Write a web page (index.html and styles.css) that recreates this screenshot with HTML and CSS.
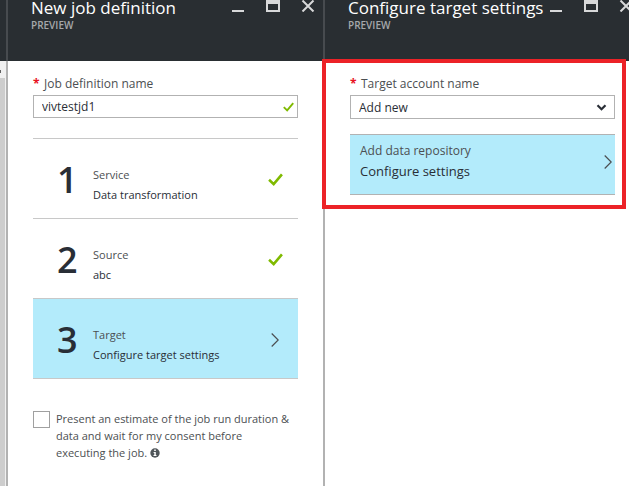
FILE: index.html
```html
<!DOCTYPE html>
<html lang="en">
<head>
<meta charset="utf-8">
<meta name="viewport" content="width=device-width, initial-scale=1">
<title>New job definition</title>
<link rel="stylesheet" href="styles.css">
</head>
<body>
<svg class="sprite" aria-hidden="true">
  <symbol id="minimize" viewBox="0 0 14 12"><path d="M1 10h12v2H1z"/></symbol>
  <symbol id="maximize" viewBox="0 0 14 12"><path fill-rule="evenodd" d="M0 0h14v12H0zM2 4v6h10V4z"/></symbol>
  <symbol id="close" viewBox="0 0 14 12"><path d="M1.500 0.500 12.500 11.500M12.500 0.500 1.500 11.500" fill="none" stroke="currentColor" stroke-width="2"/></symbol>
  <symbol id="check" viewBox="0 0 14 12"><path d="M1 6.200 5.300 10.300 13 1.200" fill="none" stroke="currentColor" stroke-width="2.400"/></symbol>
  <symbol id="chevron" viewBox="0 0 8 14"><path d="M.700.500 7.200 7 .700 13.500" fill="none" stroke="currentColor" stroke-width="1.200"/></symbol>
  <symbol id="caret" viewBox="0 0 10 7"><path d="M1 1.200 5 5.200 9 1.200" fill="none" stroke="currentColor" stroke-width="2.200"/></symbol>
</svg>
<div class="portal">
  <div class="rail"><div class="rail-top"></div><div class="rail-arrow"></div><div class="rail-thumb"></div></div>

  <section class="blade">
    <header class="blade-header">
      <div class="heading"><h1>New job definition</h1><p>PREVIEW</p></div>
      <div class="actions">
        <button type="button" aria-label="Minimize"><svg><use href="#minimize"/></svg></button>
        <button type="button" aria-label="Maximize"><svg><use href="#maximize"/></svg></button>
        <button type="button" aria-label="Close"><svg><use href="#close"/></svg></button>
      </div>
    </header>
    <div class="blade-body">
      <label class="field-label" for="job-name"><span class="required">*</span>Job definition name</label>
      <div class="field">
        <input class="control" id="job-name" type="text" value="vivtestjd1">
        <svg class="field-icon valid"><use href="#check"/></svg>
      </div>
      <div class="steps">
        <button class="step" type="button">
          <span class="number">1</span>
          <span class="step-text"><span>Service</span><span class="value">Data transformation</span></span>
          <svg class="check"><use href="#check"/></svg>
        </button>
        <button class="step" type="button">
          <span class="number">2</span>
          <span class="step-text"><span>Source</span><span class="value">abc</span></span>
          <svg class="check"><use href="#check"/></svg>
        </button>
        <button class="step selected" type="button">
          <span class="number">3</span>
          <span class="step-text"><span>Target</span><span class="value">Configure target settings</span></span>
          <svg class="chevron"><use href="#chevron"/></svg>
        </button>
      </div>
      <div class="consent">
        <input id="consent" type="checkbox">
        <label for="consent">Present an estimate of the job run duration &amp; data and wait for my consent before executing the job. <svg class="info" viewBox="0 0 10 10"><circle cx="5" cy="5" r="4.700" fill="#50565a"/><path d="M4.200 1.600h1.600v1.400H4.200zM3.600 4h2.200v3h.700v1h-3V7h.800V5h-.700z" fill="#fff"/></svg></label>
      </div>
    </div>
  </section>

  <section class="blade target">
    <header class="blade-header">
      <div class="heading"><h1>Configure target settings</h1><p>PREVIEW</p></div>
      <div class="actions">
        <button type="button" aria-label="Minimize"><svg><use href="#minimize"/></svg></button>
        <button type="button" aria-label="Maximize"><svg><use href="#maximize"/></svg></button>
        <button type="button" aria-label="Close"><svg><use href="#close"/></svg></button>
      </div>
    </header>
    <div class="blade-body">
      <label class="field-label" for="account"><span class="required">*</span>Target account name</label>
      <div class="field">
        <select class="control" id="account"><option>Add new</option></select>
        <svg class="field-icon caret"><use href="#caret"/></svg>
      </div>
      <button class="repository" type="button">
        <span class="repository-text"><span>Add data repository</span><span class="repository-value">Configure settings</span></span>
        <svg class="chevron"><use href="#chevron"/></svg>
      </button>
      <div class="highlight"></div>
    </div>
  </section>
</div>
</body>
</html>
```

FILE: styles.css
```css
* { box-sizing: border-box; }

body {
  margin: 0;
  background: #fff;
  color: #4c4f52;
  font: 12px/17px "Open Sans", "Noto Sans", sans-serif;
  overflow: hidden;
}

button, input, select { font: inherit; color: inherit; border-radius: 0; }
button { margin: 0; padding: 0; border: 0; background: none; text-align: left; cursor: pointer; }
svg { display: block; fill: currentColor; }
.sprite { position: absolute; width: 0; height: 0; }

.portal {
  display: grid;
  grid-template-columns: 6px 317fr 306fr;
  min-height: 100vh;
}

.rail { display: flex; flex-direction: column; background: #f0f0f0; }
.rail-top { height: 61px; background: #292e32; }
.rail-arrow { width: 1px; height: 3px; margin: 9px 0 5px; background: #606060; }
.rail-thumb { flex: 1; width: 5px; background: #cdcdcd; }

.blade { display: flex; flex-direction: column; min-width: 0; }
.blade-header {
  display: flex;
  justify-content: space-between;
  height: 61px;
  padding: 0 8px 0 23px;
  border-left: 2px solid #474b4f;
  background: #292e32;
  color: #fff;
}
.heading { white-space: nowrap; }
h1 { margin: -4px 0 0; font-size: 17px; line-height: 24px; font-weight: 400; }
.heading p { margin: 0; font-size: 10px; line-height: 10px; font-weight: 600; color: #a5a8aa; }
.actions { display: flex; gap: 21px; color: #d8d9da; }
.actions button { height: 12px; }
.actions svg { width: 14px; height: 12px; }

.blade-body {
  position: relative;
  flex: 1;
  padding: 14px 25px 20px;
  border-left: 2px solid #b2b2b2;
}
.target .blade-header { padding-right: 0; }
.target .actions { margin-right: -4px; }
.target .blade-body { padding-right: 14px; }

.field-label { display: flex; height: 20px; line-height: 18px; }
.required { width: 11px; color: #e81123; font-weight: 700; }
.field { position: relative; }
.control {
  display: block;
  width: 100%;
  height: 24px;
  padding: 0 24px 0 8px;
  border: 1px solid #b2b2b2;
  background: #fff;
  color: #292e36;
  appearance: none;
}
input.control { height: 23px; }
.field-icon { position: absolute; }
.valid { top: 7px; right: 4px; width: 11px; height: 10px; color: #7fba00; }
.caret { top: 9px; right: 8px; width: 11px; height: 7px; color: #292e36; }

.steps { margin-top: 20px; border-top: 1px solid #c8c8c8; }
.step {
  display: flex;
  align-items: center;
  width: 100%;
  height: 80px;
  padding: 2px 15px 0 24px;
  border-bottom: 1px solid #c8c8c8;
  font-size: 11px;
}
.selected, .repository { background: #b3ebfb; }
.number { width: 36px; font-size: 36px; line-height: 40px; font-weight: 600; color: #292e36; }
.step-text { display: flex; flex: 1; flex-direction: column; padding-top: 10px; line-height: 20px; white-space: nowrap; }
.value, .repository-value { color: #292e36; }
.check { width: 15px; height: 13px; color: #7fba00; }
.chevron { width: 8px; height: 14px; }
.step .chevron { margin-right: 4px; }

.consent { display: flex; align-items: flex-start; gap: 6px; margin-top: 31px; font-size: 11px; }
.consent label { flex: 1; padding-right: 6px; }
.consent input {
  flex: none;
  width: 17px;
  height: 17px;
  margin: 1px 0 0;
  border: 1px solid #a0a0a0;
  background: #fff;
  appearance: none;
}
.consent input:checked { background: #7fba00; }
.info { display: inline-block; width: 10px; height: 10px; vertical-align: -1px; }

.repository {
  display: flex;
  align-items: center;
  justify-content: space-between;
  width: 100%;
  height: 61px;
  margin-top: 15px;
  padding: 0 3px 6px 10px;
  border-block: 1px solid #b2b2b2;
}
.repository-text { display: flex; flex-direction: column; padding-bottom: 2px; line-height: 20px; white-space: nowrap; }
.repository-value { font-size: 13px; }

.highlight {
  position: absolute;
  top: -2px;
  left: -3px;
  right: 3px;
  height: 150px;
  border: 4px solid #ec2227;
  pointer-events: none;
}
```
